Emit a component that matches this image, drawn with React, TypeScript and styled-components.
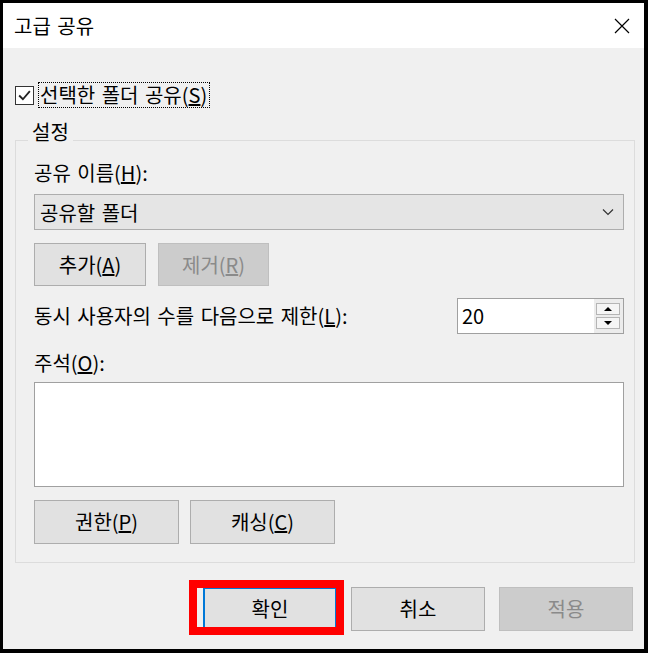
import React from "react";
import styled, { createGlobalStyle } from "styled-components";

const Global = createGlobalStyle`
  html, body { margin: 0; padding: 0; background: #ffffff; }
  body { font-family: "Noto Sans CJK KR", "Noto Sans", sans-serif; }
  * { box-sizing: border-box; }
`;

const Window = styled.div`
  width: 648px;
  height: 653px;
  border: 3px solid #000;
  border-right-width: 4px;
  border-bottom-width: 4px;
  display: flex;
  flex-direction: column;
  font-family: "Noto Sans CJK KR", "Noto Sans", sans-serif;
  font-size: 20px;
  word-spacing: 2px;
  color: #000;
`;

const TitleBar = styled.div`
  height: 45px;
  background: #fff;
  display: flex;
  align-items: center;
  justify-content: space-between;
  padding: 0 14px 0 11px;
`;

const Title = styled.span`
  font-size: 20px;
  line-height: 24px;
`;

const Close = styled.svg`
  width: 16px;
  height: 16px;
`;

const Body = styled.div`
  flex: 1;
  background: #f0f0f0;
  padding: 34px 9px 0 12px;
  display: flex;
  flex-direction: column;
`;

const CheckRow = styled.div`
  height: 26px;
  display: flex;
  align-items: center;
`;

const Box = styled.span`
  width: 19px;
  height: 19px;
  border: 1px solid #333;
  background: #fff;
  display: flex;
  align-items: center;
  justify-content: center;
  margin-right: 4px;
`;

const Focus = styled.span`
  border: 1px dotted #000;
  height: 26px;
  display: flex;
  align-items: center;
  padding: 0 2px 0 1px;
  line-height: 22px;
`;

const Group = styled.div`
  position: relative;
  margin-top: 32px;
  border: 1px solid #dcdcdc;
  padding: 21px 10px 18px 18px;
  display: flex;
  flex-direction: column;
`;

const Legend = styled.span`
  position: absolute;
  left: 12px;
  top: -20px;
  padding: 0 4px;
  background: #f0f0f0;
  line-height: 22px;
`;

const Label = styled.div<{ $mt?: number }>`
  line-height: 22px;
  margin-top: ${(p) => p.$mt ?? 0}px;
`;

const Combo = styled.div`
  margin-top: 10px;
  height: 36px;
  background: #e5e5e5;
  border: 1px solid #adadad;
  display: flex;
  align-items: center;
  justify-content: space-between;
  padding: 0 9px 0 5px;
`;

const Row = styled.div<{ $mt: number; $gap: number }>`
  margin-top: ${(p) => p.$mt}px;
  display: flex;
  gap: ${(p) => p.$gap}px;
`;

const Button = styled.button<{ $w: number; $h: number; $disabled?: boolean; $default?: boolean }>`
  position: relative;
  width: ${(p) => p.$w}px;
  height: ${(p) => p.$h}px;
  font-family: inherit;
  font-size: 20px;
  line-height: 22px;
  padding: 0;
  background: ${(p) => (p.$disabled ? "#cccccc" : "#e1e1e1")};
  color: ${(p) => (p.$disabled ? "#8a8a8a" : "#000")};
  border: ${(p) => (p.$default ? "2px solid #0078d7" : p.$disabled ? "1px solid #bfbfbf" : "1px solid #adadad")};
`;

const LimitRow = styled.div`
  margin-top: 12px;
  height: 35px;
  display: flex;
  align-items: center;
  justify-content: space-between;
`;

const Spinner = styled.div`
  width: 167px;
  height: 36px;
  border: 1px solid #a0a0a0;
  background: #fff;
  display: flex;
`;

const SpinText = styled.div`
  flex: 1;
  display: flex;
  align-items: center;
  padding-left: 4px;
  font-size: 20px;
`;

const SpinCol = styled.div`
  width: 29px;
  background: #ececec;
  display: flex;
  flex-direction: column;
  justify-content: center;
  gap: 2px;
  padding: 0 3px 0 2px;
`;

const SpinBtn = styled.div`
  height: 12px;
  border: 1px solid #b5b5b5;
  background: #f5f5f5;
  display: flex;
  align-items: center;
  justify-content: center;
`;

const Arrow = styled.span<{ $up?: boolean }>`
  width: 0;
  height: 0;
  border-left: 4px solid transparent;
  border-right: 4px solid transparent;
  ${(p) => (p.$up ? "border-bottom: 4px solid #000;" : "border-top: 4px solid #000;")}
`;

const TextArea = styled.div`
  margin-top: 8px;
  height: 105px;
  background: #fff;
  border: 1px solid #a0a0a0;
`;

const Footer = styled.div`
  margin-top: 24px;
  display: flex;
  justify-content: flex-end;
  gap: 14px;
  padding-right: 2px;
`;

const Highlight = styled.span`
  position: absolute;
  left: -16px;
  top: -9px;
  width: 155px;
  height: 55px;
  border: 8px solid #ff0000;
  pointer-events: none;
`;

const Cap = styled.span`
  display: inline-flex;
  align-items: center;
`;

export default function App() {
  return (
    <>
      <Global />
      <Window>
        <TitleBar>
          <Title>고급 공유</Title>
          <Close viewBox="0 0 16 16">
            <path d="M1 1 L15 15 M15 1 L1 15" stroke="#000" strokeWidth="1.2" fill="none" />
          </Close>
        </TitleBar>
        <Body>
          <CheckRow>
            <Box>
              <svg width="15" height="15" viewBox="0 0 14 14">
                <path d="M2 7 L5.5 10.5 L12 3" stroke="#222" strokeWidth="1.7" fill="none" />
              </svg>
            </Box>
            <Focus>
              선택한 폴더 공유(<u>S</u>)
            </Focus>
          </CheckRow>
          <Group>
            <Legend>설정</Legend>
            <Label>
              공유 이름(<u>H</u>):
            </Label>
            <Combo>
              <span>공유할 폴더</span>
              <svg width="12" height="8" viewBox="0 0 12 8">
                <path d="M1 1.5 L6 6.5 L11 1.5" stroke="#333" strokeWidth="1.2" fill="none" />
              </svg>
            </Combo>
            <Row $mt={13} $gap={12}>
              <Button $w={112} $h={43}>
                <Cap>
                  추가(<u>A</u>)
                </Cap>
              </Button>
              <Button $w={111} $h={43} $disabled>
                <Cap>
                  제거(<u>R</u>)
                </Cap>
              </Button>
            </Row>
            <LimitRow>
              <span>
                동시 사용자의 수를 다음으로 제한(<u>L</u>):
              </span>
              <Spinner>
                <SpinText>20</SpinText>
                <SpinCol>
                  <SpinBtn>
                    <Arrow $up />
                  </SpinBtn>
                  <SpinBtn>
                    <Arrow />
                  </SpinBtn>
                </SpinCol>
              </Spinner>
            </LimitRow>
            <Label $mt={19}>
              주석(<u>O</u>):
            </Label>
            <TextArea />
            <Row $mt={13} $gap={11}>
              <Button $w={145} $h={44}>
                <Cap>
                  권한(<u>P</u>)
                </Cap>
              </Button>
              <Button $w={145} $h={44}>
                <Cap>
                  캐싱(<u>C</u>)
                </Cap>
              </Button>
            </Row>
          </Group>
          <Footer>
            <Button $w={134} $h={44} $default>
              확인
              <Highlight />
            </Button>
            <Button $w={134} $h={44}>
              취소
            </Button>
            <Button $w={134} $h={44} $disabled>
              적용
            </Button>
          </Footer>
        </Body>
      </Window>
    </>
  );
}
